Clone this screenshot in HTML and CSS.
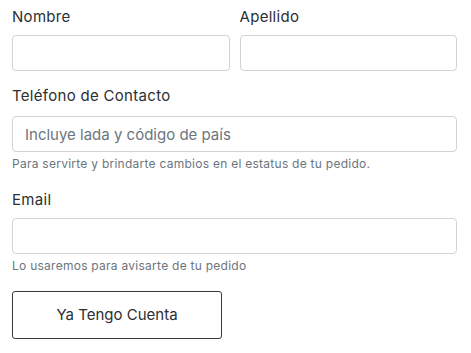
FILE: index.html
```html
<!DOCTYPE html>
<html lang="es">
<head>
<meta charset="utf-8">
<title>Registro</title>
<link rel="stylesheet" href="styles.css">
</head>
<body>
<form class="form">
  <div class="row">
    <div class="field">
      <label class="label" for="nombre">Nombre</label>
      <input class="input" id="nombre" type="text">
    </div>
    <div class="field">
      <label class="label" for="apellido">Apellido</label>
      <input class="input" id="apellido" type="text">
    </div>
  </div>
  <div class="field field-phone">
    <label class="label label-phone" for="tel">Teléfono de Contacto</label>
    <input class="input" id="tel" type="tel" placeholder="Incluye lada y código de país">
    <p class="help">Para servirte y brindarte cambios en el estatus de tu pedido.</p>
  </div>
  <div class="field field-email">
    <label class="label label-email" for="email">Email</label>
    <input class="input" id="email" type="email">
    <p class="help">Lo usaremos para avisarte de tu pedido</p>
  </div>
  <button class="btn" type="button">Ya Tengo Cuenta</button>
</form>
</body>
</html>
```

FILE: styles.css
```css
html, body {
  margin: 0;
  padding: 0;
  background: #ffffff;
}
body {
  font-family: Inter, "Open Sans", "Liberation Sans", sans-serif;
  color: #2b2f33;
}
.form {
  width: 445px;
  padding: 6px 0 0 12px;
}
.row {
  display: grid;
  grid-template-columns: 1fr 1fr;
  column-gap: 10px;
  margin-bottom: 14px;
}
.label {
  display: block;
  font-size: 15px;
  line-height: 22px;
  letter-spacing: 0.3px;
  margin-bottom: 7px;
  color: #2b2f33;
}
.label-phone {
  margin-bottom: 9px;
}
.input {
  display: block;
  box-sizing: border-box;
  width: 100%;
  height: 36px;
  margin: 0;
  padding: 0 12px;
  border: 1px solid #ced4da;
  border-radius: 4px;
  font-family: inherit;
  font-size: 15px;
  color: #2b2f33;
  background: #fff;
}
.input::placeholder {
  color: #6c757d;
  opacity: 1;
}
.help {
  margin: 3px 0 0;
  font-size: 12px;
  line-height: 18px;
  letter-spacing: 0.26px;
  color: #6c757d;
}
.field-email {
  margin-top: 16px;
}
.btn {
  display: block;
  box-sizing: border-box;
  margin-top: 16px;
  width: 210px;
  height: 48px;
  padding: 0 0 1px;
  border: 1px solid #343a40;
  border-radius: 3px;
  background: #fff;
  font-family: inherit;
  font-size: 15px;
  color: #2b2f33;
  cursor: pointer;
}
```
